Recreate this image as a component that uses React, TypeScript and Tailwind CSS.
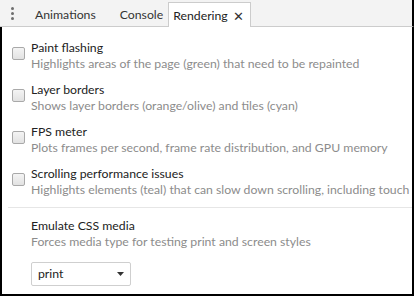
import React from "react";

const rows = [
  { t: "Paint flashing", d: "Highlights areas of the page (green) that need to be repainted" },
  { t: "Layer borders", d: "Shows layer borders (orange/olive) and tiles (cyan)" },
  { t: "FPS meter", d: "Plots frames per second, frame rate distribution, and GPU memory" },
  { t: "Scrolling performance issues", d: "Highlights elements (teal) that can slow down scrolling, including touch & wheel event handlers and other main-thread scrolling situations." },
];

function Check() {
  return (
    <div className="w-[13px] h-[13px] mt-[7px] rounded-[2px] border border-[#a9a9a9] bg-gradient-to-b from-[#f4f4f4] to-[#e2e2e2] shrink-0" />
  );
}

export default function App() {
  return (
    <div
      className="w-[414px] h-[296px] overflow-hidden bg-white flex flex-col text-[12.25px] leading-[16px] text-[#222]"
      style={{ fontFamily: "Lato, 'Open Sans', sans-serif" }}
    >
      <div className="h-[27px] shrink-0 bg-[#f3f3f3] border-b border-[#cccccc] flex items-stretch border-r-2 border-r-black">
        <div className="w-[24px] flex flex-col items-center justify-center gap-[2px] pl-[1px]">
          <div className="w-[3px] h-[3px] rounded-full bg-[#6e6e6e]" />
          <div className="w-[3px] h-[3px] rounded-full bg-[#6e6e6e]" />
          <div className="w-[3px] h-[3px] rounded-full bg-[#6e6e6e]" />
        </div>
        <div className="ml-[11px] pt-[3px] flex items-center text-[#333]">Animations</div>
        <div className="ml-[24px] pt-[3px] flex items-center text-[#333]">Console</div>
        <div className="ml-[5px] mt-[2px] -mb-[1px] bg-white border-x border-t border-[#cccccc] flex items-center pt-[1px] pl-[4px] pr-[6px] text-[#222]">
          <span>Rendering</span>
          <span className="ml-[5px] text-[#333] text-[13px]">✕</span>
        </div>
      </div>
      <div className="flex-1 border-l-2 border-r-2 border-b-2 border-black overflow-hidden">
        <div className="pt-[13px] flex flex-col gap-[10px]">
          {rows.map((r) => (
            <div key={r.t} className="flex pl-[10px]">
              <Check />
              <div className="ml-[6px] whitespace-nowrap">
                <div className="text-[#222]">{r.t}</div>
                <div className="text-[#8c8c8c]">{r.d}</div>
              </div>
            </div>
          ))}
        </div>
        <div className="ml-[6px] mt-[9px] border-t border-[#e6e6e6]" />
        <div className="pl-[29px] pt-[10px]">
          <div className="text-[#222]">Emulate CSS media</div>
          <div className="text-[#8c8c8c]">Forces media type for testing print and screen styles</div>
          <div className="mt-[12px] w-[100px] h-[24px] border border-[#cfcfcf] rounded-[2px] flex items-center justify-between pl-[6px] pr-[6px] bg-white">
            <span className="text-[#222]">print</span>
            <svg width="7" height="4" viewBox="0 0 7 4"><path d="M0 0h7L3.5 4z" fill="#333" /></svg>
          </div>
        </div>
      </div>
    </div>
  );
}
